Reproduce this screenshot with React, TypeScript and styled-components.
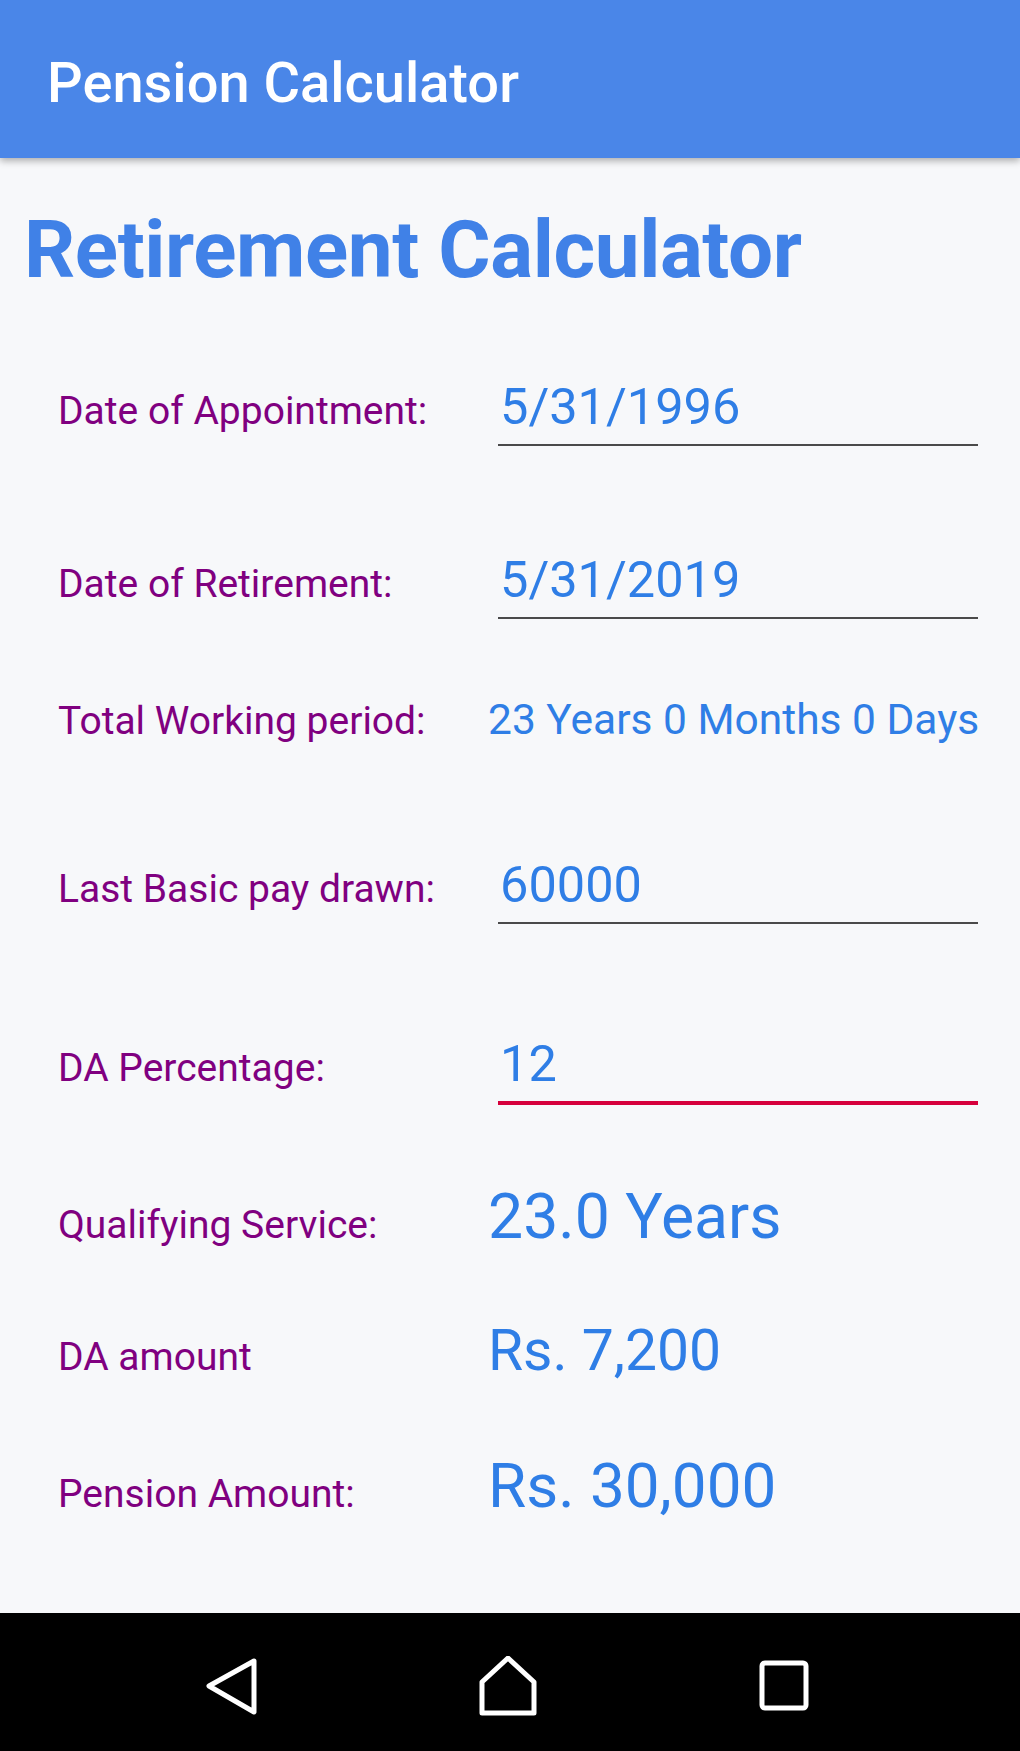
import React from 'react'
import styled, { createGlobalStyle } from 'styled-components'

const GlobalStyle = createGlobalStyle`
  html, body {
    margin: 0;
    padding: 0;
    background: #f7f8fa;
    font-family: Roboto, "Liberation Sans", sans-serif;
  }
`

const Screen = styled.div`
  display: flex;
  flex-direction: column;
  min-height: 100vh;
  background: #f7f8fa;
`

const AppBar = styled.header`
  height: 158px;
  background: #4a86e8;
  box-shadow: 0 3px 7px rgba(0, 0, 0, 0.3);
  padding-left: 47px;
  padding-top: 55px;
  box-sizing: border-box;
  position: relative;
  z-index: 1;
`

const AppTitle = styled.h1`
  margin: 0;
  font-size: 56px;
  line-height: 1;
  font-weight: 500;
  color: #ffffff;
`

const Content = styled.main`
  flex: 1;
  padding: 52px 0 0 0;
`

const Heading = styled.h2`
  margin: 0 0 92px 24px;
  font-size: 80px;
  line-height: 1;
  font-weight: 700;
  letter-spacing: -0.4px;
  color: #4081e7;
`

const Row = styled.div<{ $h: number }>`
  display: flex;
  align-items: baseline;
  height: ${p => p.$h}px;
  padding-left: 58px;
`

const Label = styled.span`
  width: 430px;
  flex-shrink: 0;
  font-size: 39px;
  line-height: 1;
  color: #800080;
`

const Field = styled.div<{ $focused?: boolean }>`
  width: 478px;
  margin-left: 10px;
  padding-left: 2px;
  font-size: 50.5px;
  line-height: 1;
  color: #2f7ee6;
  padding-bottom: ${p => (p.$focused ? 11 : 11)}px;
  border-bottom: ${p => (p.$focused ? '4px solid #d6003c' : '2px solid #4a4a4a')};
`

const Value = styled.span<{ $size: number }>`
  font-size: ${p => p.$size}px;
  line-height: 1;
  color: #2f7ee6;
  white-space: nowrap;
`

const NavBar = styled.nav`
  height: 138px;
  background: #000;
  display: flex;
  align-items: center;
  justify-content: center;
  gap: 216px;
  padding-top: 8px;
  padding-right: 4px;
  box-sizing: border-box;
`

const NavIcon = styled.svg`
  width: 60px;
  height: 60px;
  fill: none;
  stroke: #fff;
  stroke-width: 5;
  stroke-linejoin: round;
`

export default function App() {
  return (
    <Screen>
      <GlobalStyle />
      <AppBar>
        <AppTitle>Pension Calculator</AppTitle>
      </AppBar>
      <Content>
        <Heading>Retirement Calculator</Heading>
        <Row $h={173}>
          <Label>Date of Appointment:</Label>
          <Field>5/31/1996</Field>
        </Row>
        <Row $h={144}>
          <Label>Date of Retirement:</Label>
          <Field>5/31/2019</Field>
        </Row>
        <Row $h={161}>
          <Label>Total Working period:</Label>
          <Value $size={42.5}>23 Years 0 Months 0 Days</Value>
        </Row>
        <Row $h={179}>
          <Label>Last Basic pay drawn:</Label>
          <Field>60000</Field>
        </Row>
        <Row $h={147}>
          <Label>DA Percentage:</Label>
          <Field $focused>12</Field>
        </Row>
        <Row $h={136}>
          <Label>Qualifying Service:</Label>
          <Value $size={62.5}>23.0 Years</Value>
        </Row>
        <Row $h={133}>
          <Label>DA amount</Label>
          <Value $size={57}>Rs. 7,200</Value>
        </Row>
        <Row $h={157}>
          <Label>Pension Amount:</Label>
          <Value $size={62}>Rs. 30,000</Value>
        </Row>
      </Content>
      <NavBar>
        <NavIcon viewBox="0 0 60 60">
          <path d="M52 5 L7 30 L52 56 Z" />
        </NavIcon>
        <NavIcon viewBox="0 0 60 60">
          <path d="M4 57 L4 26 L30 2 L56 26 L56 57 Z" />
        </NavIcon>
        <NavIcon viewBox="0 0 60 60">
          <rect x="8" y="7" width="44" height="45" rx="3" />
        </NavIcon>
      </NavBar>
    </Screen>
  )
}
